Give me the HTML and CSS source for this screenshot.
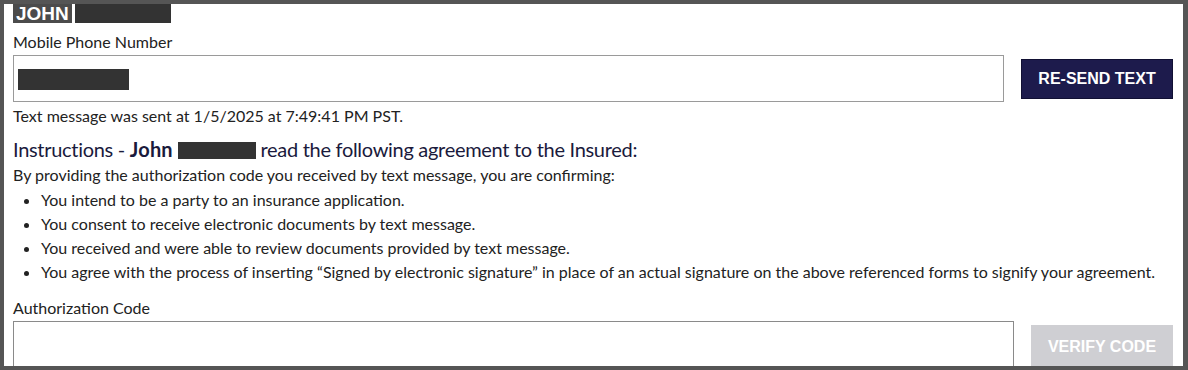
FILE: index.html
```html
<!DOCTYPE html>
<html lang="en">
<head>
  <meta charset="UTF-8" />
  <title>Authorization</title>
  <link rel="stylesheet" href="styles.css">
</head>
<body>
  <div class="frame">
    <div class="agent">
      <span class="agent-name">JOHN</span>
      <span class="redact redact-last"></span>
    </div>

    <label class="field-label" for="phone">Mobile Phone Number</label>
    <div class="field-row">
      <div class="field phone-field" id="phone">
        <span class="redact redact-phone"></span>
      </div>
      <button class="btn btn-send">RE-SEND TEXT</button>
    </div>
    <p class="sent-note">Text message was sent at 1/5/2025 at 7:49:41 PM PST.</p>

    <h2 class="instructions">Instructions - <strong>John</strong> <span class="redact redact-heading"></span> read the following agreement to the Insured:</h2>

    <p class="lead">By providing the authorization code you received by text message, you are confirming:</p>
    <ul class="terms">
      <li>You intend to be a party to an insurance application.</li>
      <li>You consent to receive electronic documents by text message.</li>
      <li>You received and were able to review documents provided by text message.</li>
      <li>You agree with the process of inserting “Signed by electronic signature” in place of an actual signature on the above referenced forms to signify your agreement.</li>
    </ul>

    <label class="field-label auth-label" for="authCode">Authorization Code</label>
    <div class="field-row auth-row">
      <input class="field auth-field" id="authCode" type="text" />
      <button class="btn btn-verify" disabled>VERIFY CODE</button>
    </div>
  </div>
</body>
</html>
```

FILE: styles.css
```css
html, body {
  margin: 0;
  padding: 0;
}
body {
  background: #555;
  font-family: Lato, 'Liberation Sans', sans-serif;
  color: #222;
  font-size: 16px;
  line-height: 20px;
}
.frame {
  margin: 4px 5px 0 4px;
  height: 362px;
  background: #fff;
  overflow: hidden;
  padding: 0 10px 0 9px;
}
.agent {
  display: flex;
  align-items: flex-start;
  gap: 3px;
  height: 19px;
}
.agent-name {
  background: #4b4b4b;
  color: #fff;
  font-family: 'Liberation Sans', Arial, sans-serif;
  font-weight: bold;
  font-size: 19px;
  line-height: 19px;
  padding: 0 3px 0 3px;
}
.redact {
  display: inline-block;
  background: #333;
}
.redact-last {
  width: 96px;
  height: 19px;
}
.redact-phone {
  width: 111px;
  height: 21px;
}
.redact-heading {
  width: 78px;
  height: 17px;
  vertical-align: -2px;
}
.field-label {
  display: block;
  margin-top: 9px;
}
.field-row {
  display: flex;
  align-items: center;
  gap: 17px;
  margin-top: 3px;
}
.field {
  flex: 1;
  box-sizing: border-box;
  border: 1px solid #9a9a9a;
  background: #fff;
  margin: 0;
}
.phone-field {
  height: 47px;
  display: flex;
  align-items: center;
  padding-left: 4px;
  padding-top: 2px;
}
.auth-field {
  height: 52px;
  border-color: #8a8a8a;
}
.btn {
  border: none;
  border-radius: 0;
  font-family: 'Liberation Sans', Arial, sans-serif;
  font-weight: bold;
  font-size: 16px;
  color: #fff;
  padding: 0;
}
.btn-send {
  width: 152px;
  height: 40px;
  background: #1d1b4c;
  border: 1px solid #111033;
  cursor: pointer;
}
.btn-verify {
  width: 142px;
  height: 44px;
  background: #cfcfd3;
}
.sent-note {
  margin: 4px 0 0;
}
.instructions {
  margin: 10px 0 0;
  font-size: 20px;
  line-height: 26px;
  letter-spacing: -0.3px;
  font-weight: normal;
  color: #1a1a3c;
}
.instructions strong {
  font-weight: bold;
  letter-spacing: 0.2px;
}
.lead {
  margin: 3px 0 0;
}
.terms {
  margin: 3px 0 0;
  padding-left: 28px;
  line-height: 24px;
}
.auth-label {
  margin-top: 14px;
}
```
